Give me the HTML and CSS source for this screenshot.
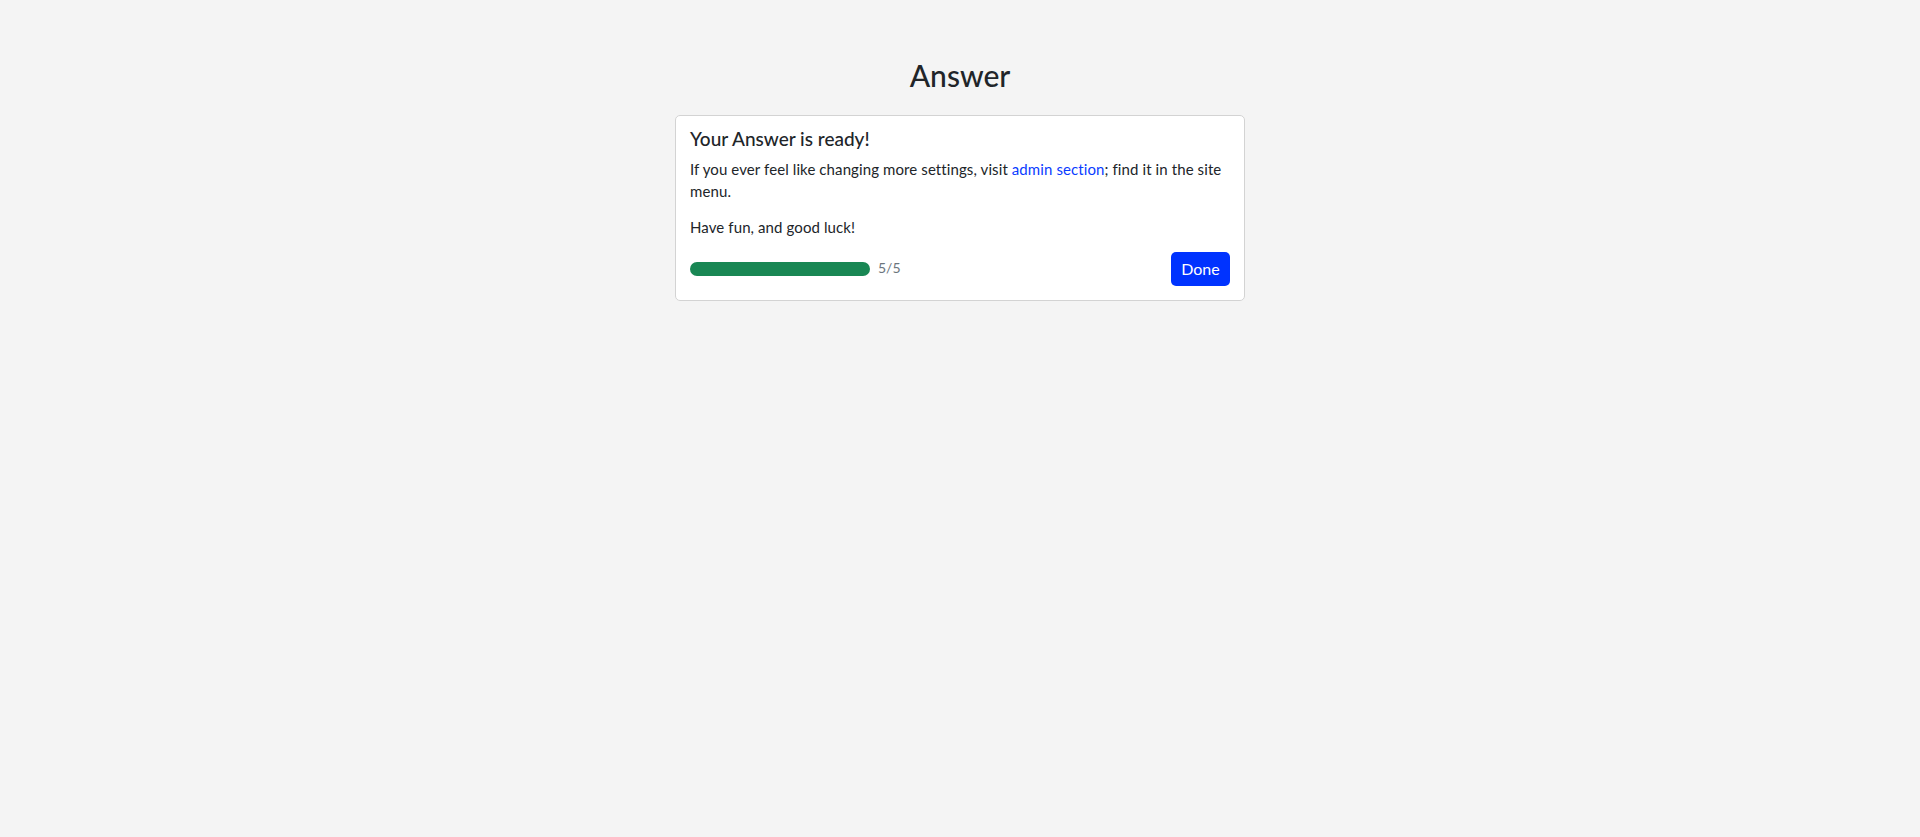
FILE: index.html
```html
<!DOCTYPE html>
<html lang="en">
<head>
<meta charset="utf-8">
<title>Answer</title>
<link rel="stylesheet" href="styles.css">
</head>
<body>
<main class="page">
  <h1 class="page-title">Answer</h1>
  <section class="card">
    <h2 class="card-title">Your Answer is ready!</h2>
    <p class="card-text">If you ever feel like changing more settings, visit <a href="#" class="link">admin section</a>; find it in the site menu.</p>
    <p class="card-text">Have fun, and good luck!</p>
    <div class="card-footer">
      <div class="progress-wrap">
        <div class="progress"><div class="progress-bar"></div></div>
        <span class="progress-label">5/5</span>
      </div>
      <button class="btn" type="button">Done</button>
    </div>
  </section>
</main>
</body>
</html>
```
FILE: styles.css
```css
* { box-sizing: border-box; }
html, body { margin: 0; padding: 0; }
body {
  background: #f4f4f4;
  color: #212529;
  font-family: Lato, "Noto Sans", sans-serif;
  font-size: 15px;
  line-height: 22px;
}
.page {
  width: 570px;
  margin: 0 auto;
  padding-top: 55px;
}
.page-title {
  margin: 0 0 20px;
  text-align: center;
  font-size: 30px;
  line-height: 40px;
  font-weight: 500;
  color: #212529;
}
.card {
  background: #fff;
  border: 1px solid #d3d3d3;
  border-radius: 5px;
  padding: 11px 14px 14px;
}
.card-title {
  margin: 0 0 7px;
  font-size: 19px;
  line-height: 24px;
  font-weight: 500;
}
.card-text {
  margin: 0 0 14px;
  letter-spacing: 0.1px;
}
.link { color: #0a3cff; text-decoration: none; }
.card-footer {
  display: flex;
  align-items: center;
  justify-content: space-between;
}
.progress-wrap {
  display: flex;
  align-items: center;
  gap: 8px;
}
.progress {
  width: 180px;
  height: 14px;
  border-radius: 7px;
  background: #e9ecef;
  overflow: hidden;
}
.progress-bar {
  width: 100%;
  height: 100%;
  background: #198754;
}
.progress-label {
  font-size: 14px;
  color: #6c757d;
  line-height: 16px;
  margin-top: -3px;
}
.btn {
  font-family: inherit;
  font-size: 16px;
  line-height: 22px;
  color: #fff;
  background: #0033ff;
  border: 0;
  border-radius: 5px;
  width: 59px;
  height: 34px;
  padding: 0;
}
```
